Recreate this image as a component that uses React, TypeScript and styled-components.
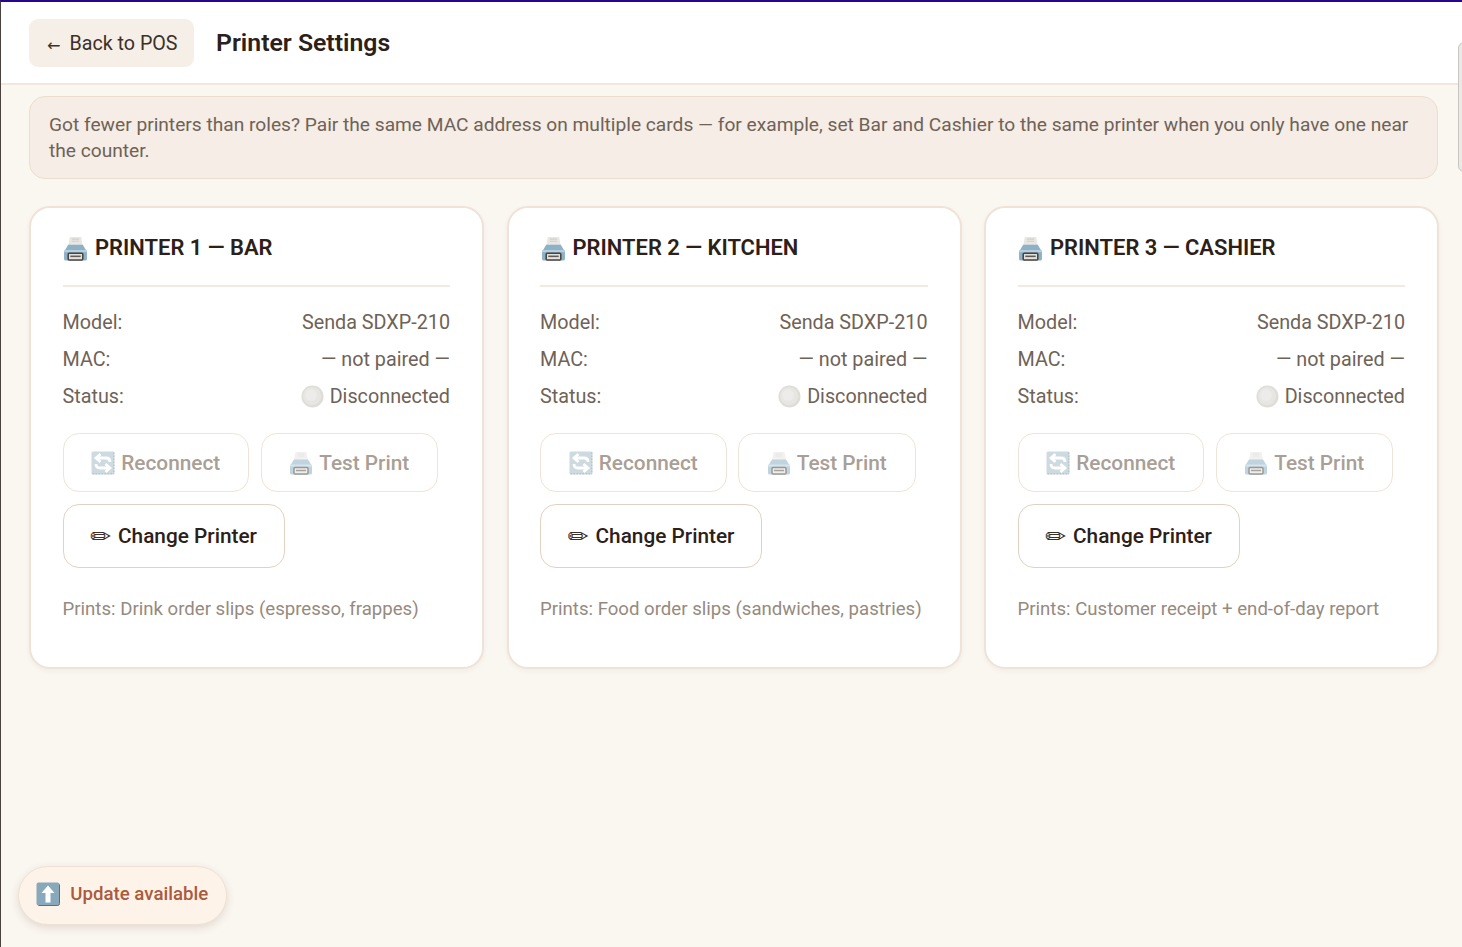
import React from "react";
import styled, { createGlobalStyle } from "styled-components";

const Global = createGlobalStyle`
  html, body { margin: 0; padding: 0; height: 100%; background: #faf6f0; }
  body { font-family: Roboto, "Liberation Sans", sans-serif; color: #2c2018; overflow: hidden; }
  * { box-sizing: border-box; }
`;

const Page = styled.div`
  position: relative;
  width: 1462px;
  height: 947px;
  background: #faf6f0;
  border-top: 2px solid #24068f;
  border-left: 1px solid #4a423c;
  display: flex;
  flex-direction: column;
  overflow: hidden;
`;
const WindowEdge = styled.div`
  position: absolute;
  left: -1px;
  top: 0;
  width: 1px;
  height: 34px;
  background: #d4d2cf;
`;
const Header = styled.header`
  height: 83px;
  flex: none;
  background: #fff;
  border-bottom: 2px solid #f0e8de;
  padding: 17px 28px 0;
  display: flex;
  align-items: flex-start;
  gap: 22px;
`;
const BackButton = styled.button`
  width: 165px;
  height: 48px;
  background: #f5efe8;
  border: 0;
  border-radius: 9px;
  font: 400 19.7px Roboto, sans-serif;
  color: #3d3027;
  display: flex;
  align-items: center;
  gap: 9px;
  padding: 0 0 0 18px;
`;
const Arrow = styled.span`
  font: 400 16px "DejaVu Sans", sans-serif;
  margin-top: 5px;
`;
const Title = styled.h1`
  margin: 0;
  height: 48px;
  line-height: 47.5px;
  font-size: 24.8px;
  font-weight: 600;
  color: #2c2018;
`;
const Content = styled.main`
  padding: 11px 24px 0 28px;
  display: flex;
  flex-direction: column;
  gap: 27px;
`;
const Notice = styled.div`
  height: 83px;
  background: #f5ede6;
  border: 1.5px solid #ecdecd;
  border-radius: 16px;
  padding: 14.500px 19px 0;
  font-size: 19.17px;
  line-height: 26.7px;
  color: #6f6257;
`;
const Grid = styled.div`
  display: grid;
  grid-template-columns: repeat(3, 455px);
  gap: 22.5px;
`;
const Card = styled.section`
  height: 462.500px;
  background: #fff;
  border: 2px solid #eee3d7;
  border-radius: 21px;
  box-shadow: 0 2px 5px rgba(90, 60, 30, 0.05);
  padding: 23px 32px 0 31.500px;
  display: flex;
  flex-direction: column;
`;
const CardHead = styled.div`
  height: 56px;
  flex: none;
  border-bottom: 2px solid #f3e9df;
  display: flex;
  align-items: flex-start;
  gap: 6.500px;
  font-size: 21.95px;
  font-weight: 600;
  line-height: 34px;
  color: #2c2018;
`;
const HeadIcon = styled.span`
  width: 26px;
  height: 34px;
  display: flex;
  align-items: center;
  justify-content: center;
  flex: none;
`;
const Rows = styled.dl`
  margin: 17px 0 0;
  display: flex;
  flex-direction: column;
`;
const Row = styled.div`
  height: 37px;
  display: flex;
  justify-content: space-between;
  align-items: center;
  font-size: 19.77px;
  color: #6f6257;
`;
const Term = styled.dt`
  font-weight: 400;
`;
const Value = styled.dd`
  margin: 0;
  display: flex;
  align-items: center;
  gap: 6px;
`;
const Actions = styled.div`
  margin-top: 18px;
  display: flex;
  flex-wrap: wrap;
  gap: 12px 11.500px;
`;
const Btn = styled.button<{ $w: number; $off?: boolean }>`
  width: ${(p) => p.$w}px;
  height: ${(p) => (p.$off ? 59 : 63.5)}px;
  background: #fff;
  border: 1.5px solid ${(p) => (p.$off ? "#f0e4d8" : "#e3d2c1")};
  border-radius: 16px;
  padding: 0;
  font: 500 20.8px Roboto, sans-serif;
  color: ${(p) => (p.$off ? "#a99f96" : "#2c2018")};
  display: flex;
  align-items: center;
  justify-content: center;
  gap: 6px;
`;
const Pencil = styled.span`
  font: 400 25px "DejaVu Sans", sans-serif;
  line-height: 30px;
  color: #3d3027;
  margin: 2px 1px 0 0;
`;
const Dim = styled.span`
  display: flex;
  opacity: 0.55;
`;
const Prints = styled.p`
  margin: 29.500px 0 0;
  font-size: 18.62px;
  line-height: 24px;
  color: #968a7f;
  white-space: nowrap;
`;
const UpdatePill = styled.button`
  position: absolute;
  left: 16.500px;
  top: 864px;
  width: 209.500px;
  height: 58.500px;
  background: #fef3e9;
  border: 1.5px solid #efe2d4;
  border-radius: 30px;
  box-shadow: 0 3px 8px rgba(90, 60, 30, 0.14);
  font: 500 18.67px Roboto, sans-serif;
  color: #ab5a3c;
  display: flex;
  align-items: center;
  justify-content: center;
  gap: 10px;
  padding: 0 0 2px;
`;
const ScrollEdge = styled.div`
  position: absolute;
  left: 1457px;
  top: 40px;
  width: 12px;
  height: 130px;
  background: #e9e9e6;
  border: 1px solid #c9c6c2;
  border-radius: 6px;
`;

const PrinterIcon = ({ size = 24 }: { size?: number }) => (
  <svg width={size} height={size} viewBox="0 0 24 24">
    <path d="M6.500 1h11l1.500 9H5z" fill="#e8e7e4" />
    <path d="M8.500 3h7M8.500 5h7" stroke="#d2d0cc" strokeWidth="1" />
    <path d="M5 8.500h14l4 6.500v7a1.500 1.500 0 0 1-1.500 1.500h-19A1.500 1.500 0 0 1 1 22v-7z" fill="#8db1c6" />
    <rect x="1" y="13.500" width="22" height="2" fill="#b9d0dc" />
    <rect x="5" y="16.500" width="14" height="6.500" rx="1" fill="#e4e1dc" stroke="#4a4540" strokeWidth="1.500" />
    <path d="M7 19.500h10" stroke="#5f5a55" strokeWidth="1.500" />
  </svg>
);
const ReconnectIcon = () => (
  <svg width="24" height="24" viewBox="0 0 24 24">
    <rect x="0.500" y="0.500" width="23" height="23" rx="1.500" fill="#a5bcc6" />
    <path d="M1.500 22.800H23M22.800 1.500V22.800" stroke="#6f8b96" strokeWidth="1" strokeDasharray="1.500 1.500" fill="none" />
    <path d="M19 11C19 8.500 17.500 7 15 7H6.500M9.500 3L5 7l4.500 4" fill="none" stroke="#fff" strokeWidth="2.800" />
    <path d="M5 13c0 2.500 1.500 4 4 4h8.500M14.500 13L19 17l-4.500 4" fill="none" stroke="#fff" strokeWidth="2.800" />
  </svg>
);
const UpIcon = () => (
  <svg width="24" height="24" viewBox="0 0 24 24">
    <rect x="0.500" y="0.500" width="23" height="23" rx="2" fill="#88a9bc" />
    <path d="M23.500 2.500V21.500A2 2 0 0 1 21.500 23.500H2.500" fill="none" stroke="#5f6f78" strokeWidth="1" />
    <path d="M12 3.500L5.500 11H9.500V20.500H14.500V11H18.500z" fill="#fff" />
  </svg>
);
const DiscIcon = () => (
  <svg width="23" height="23" viewBox="0 0 24 24">
    <circle cx="12" cy="12" r="11.500" fill="#dfddd8" />
    <circle cx="11.500" cy="11.500" r="9.500" fill="#e8e6e2" />
    <circle cx="10.500" cy="10.500" r="6" fill="#eeecea" />
  </svg>
);

const printers = [
  { name: "PRINTER 1 — BAR", prints: "Prints: Drink order slips (espresso, frappes)" },
  { name: "PRINTER 2 — KITCHEN", prints: "Prints: Food order slips (sandwiches, pastries)" },
  { name: "PRINTER 3 — CASHIER", prints: "Prints: Customer receipt + end-of-day report" },
];

export default function App() {
  return (
    <Page>
      <Global />
      <WindowEdge />
      <Header>
        <BackButton>
          <Arrow>←</Arrow>Back to POS
        </BackButton>
        <Title>Printer Settings</Title>
      </Header>
      <ScrollEdge />
      <Content>
        <Notice>
          Got fewer printers than roles? Pair the same MAC address on multiple cards — for example, set Bar and Cashier
          to the same printer when you only have one near the counter.
        </Notice>
        <Grid>
          {printers.map((p) => (
            <Card key={p.name}>
              <CardHead>
                <HeadIcon>
                  <PrinterIcon size={25} />
                </HeadIcon>
                {p.name}
              </CardHead>
              <Rows>
                <Row>
                  <Term>Model:</Term>
                  <Value>Senda SDXP-210</Value>
                </Row>
                <Row>
                  <Term>MAC:</Term>
                  <Value>— not paired —</Value>
                </Row>
                <Row>
                  <Term>Status:</Term>
                  <Value>
                    <DiscIcon />
                    Disconnected
                  </Value>
                </Row>
              </Rows>
              <Actions>
                <Btn $w={186.5} $off>
                  <Dim>
                    <ReconnectIcon />
                  </Dim>
                  Reconnect
                </Btn>
                <Btn $w={177.5} $off>
                  <Dim>
                    <PrinterIcon />
                  </Dim>
                  Test Print
                </Btn>
                <Btn $w={222}>
                  <Pencil>✏</Pencil>Change Printer
                </Btn>
              </Actions>
              <Prints>{p.prints}</Prints>
            </Card>
          ))}
        </Grid>
      </Content>
      <UpdatePill>
        <UpIcon />
        Update available
      </UpdatePill>
    </Page>
  );
}
